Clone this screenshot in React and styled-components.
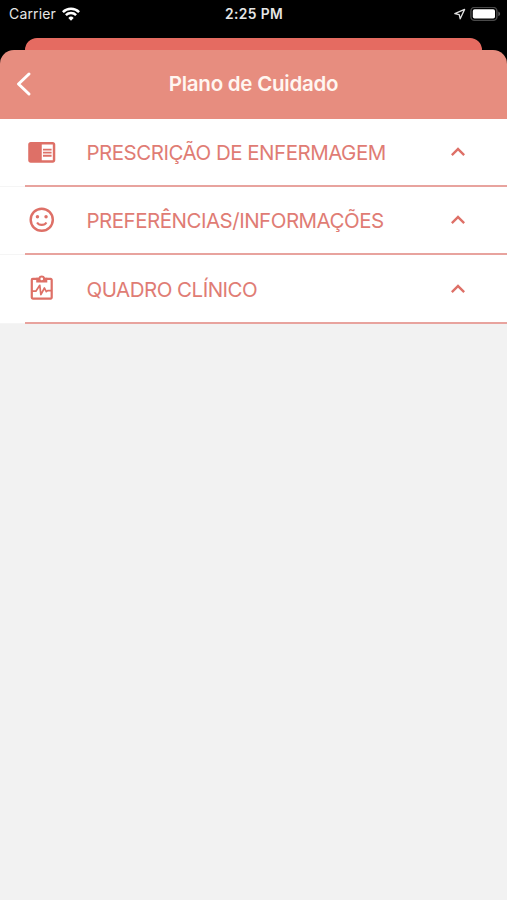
import styled, { createGlobalStyle } from 'styled-components';

const GlobalStyle = createGlobalStyle`
  * {
    box-sizing: border-box;
  }

  body {
    margin: 0;
    background: #f2f2f2;
    font-family: Inter, 'Liberation Sans', sans-serif;
  }
`;

const Screen = styled.div`
  display: flex;
  flex-direction: column;
  height: 900px;
  background: #f2f2f2;
  overflow: hidden;
`;

const Backdrop = styled.div`
  background: #000;
`;

const StatusBar = styled.div`
  display: grid;
  grid-template-columns: 1fr auto 1fr;
  align-items: center;
  height: 38px;
  padding: 0 6px 10px 9px;
  color: #e6e6e6;
  font-size: 14px;
  line-height: 18px;
`;

const Carrier = styled.div`
  display: flex;
  align-items: center;
  gap: 6px;
  letter-spacing: 0.15px;
`;

const Time = styled.div`
  padding-right: 2px;
  font-size: 13.8px;
  font-weight: 600;
  letter-spacing: 0.4px;
`;

const StatusIcons = styled.div`
  display: flex;
  align-items: center;
  justify-content: flex-end;
  gap: 4px;
`;

const PreviousCard = styled.div`
  height: 12px;
  margin: 0 25px;
  border-radius: 12px 12px 0 0;
  background: #e56b61;
`;

const Header = styled.header`
  display: grid;
  grid-template-columns: 60px 1fr 60px;
  align-items: center;
  height: 68.6px;
  border-radius: 14px 14px 0 0;
  background: #e78d7f;
`;

const BackButton = styled.button`
  display: flex;
  height: 26px;
  padding: 0 0 0 15px;
  border: none;
  background: transparent;
`;

const Title = styled.h1`
  margin: 0;
  color: #fff6f1;
  font-size: 20.5px;
  font-weight: 600;
  line-height: 26px;
  letter-spacing: -0.25px;
  text-align: center;
`;

const List = styled.ul`
  margin: 0;
  padding: 0;
  list-style: none;
`;

const Row = styled.li`
  display: flex;
  height: 68.4px;
  padding-left: 25px;
  background: #fff;
  box-shadow: inset 0 -1px 0 #f5f5f5;
`;

const RowContent = styled.div`
  display: flex;
  flex: 1;
  align-items: center;
  padding-right: 35px;
  border-bottom: 2px solid #e8a39e;
  color: #de7067;
`;

const IconSlot = styled.span`
  display: flex;
  width: 61.5px;
  padding-left: 2px;
`;

const Label = styled.span`
  flex: 1;
  padding-top: 2px;
  color: #e07c74;
  font-size: 20.5px;
  font-weight: 400;
  line-height: 26px;
  letter-spacing: -0.5px;
  white-space: nowrap;
`;

const WifiIcon = () => (
  <svg width="18" height="14" viewBox="0 0 18 14" fill="none" stroke="#fff" strokeWidth="2.5">
    <path d="M0.9 5.1a11.4 11.4 0 0 1 16.2 0" />
    <path d="M3.9 8.1a7.2 7.2 0 0 1 10.2 0" />
    <path d="M9 13.7l-2.7-2.8a3.9 3.9 0 0 1 5.4 0z" fill="#fff" stroke="none" />
  </svg>
);

const LocationIcon = () => (
  <svg width="13" height="13" viewBox="0 0 13 13" fill="none" stroke="#e0e0e0" strokeWidth="1.3">
    <path d="M1.8 5.6L11.6 1.4 7.2 10.8 6.2 6.6z" strokeLinejoin="round" />
  </svg>
);

const BatteryIcon = () => (
  <svg width="31" height="15" viewBox="0 0 31 15">
    <rect x="0.9" y="0.4" width="26" height="13" rx="3.6" fill="none" stroke="#4a4a4a" strokeWidth="1.4" />
    <rect x="2.8" y="2.3" width="22.2" height="9.2" rx="1.8" fill="#fff" />
    <path d="M28.3 4.5v4.8c2.4-1 2.4-3.8 0-4.8z" fill="#5a5a5a" />
  </svg>
);

const BackIcon = () => (
  <svg width="18" height="26" viewBox="0 0 18 26" fill="none" stroke="#fff" strokeWidth="3">
    <path d="M14 3L3.5 13 14 23" strokeLinecap="round" strokeLinejoin="round" />
  </svg>
);

const ReaderIcon = () => (
  <svg width="29.5" height="29.5" viewBox="0 0 24 24" fill="currentColor">
    <path d="M13 12h7v1.5h-7zm0-2.5h7V11h-7zm0 5h7V16h-7zM21 4H3c-1.1 0-2 .9-2 2v13c0 1.1.9 2 2 2h18c1.1 0 2-.9 2-2V6c0-1.1-.9-2-2-2zm0 15h-9V6h9v13z" />
  </svg>
);

const FaceIcon = () => (
  <svg width="29.5" height="29.5" viewBox="0 0 24 24" fill="none" stroke="currentColor" strokeWidth="2">
    <circle cx="12" cy="12" r="9" />
    <path d="M8.2 14.2c1.5 2.6 6.1 2.6 7.6 0" strokeWidth="1.7" />
    <circle cx="8.5" cy="9.5" r="1.4" fill="currentColor" stroke="none" />
    <circle cx="15.5" cy="9.5" r="1.4" fill="currentColor" stroke="none" />
  </svg>
);

const ClipboardIcon = () => (
  <svg width="29.5" height="29.5" viewBox="0 0 24 24" fill="none" stroke="currentColor" strokeWidth="1.8">
    <path d="M9 4H4.7a.8.8 0 0 0-.8.8v14.4a.8.8 0 0 0 .8.8h14.6a.8.8 0 0 0 .8-.8V4.8a.8.8 0 0 0-.8-.8H15" />
    <path d="M7.5 3.1h1.7a3 3 0 0 1 5.6 0h1.7v3.8h-9zM12 2.9a1.1 1.1 0 1 0 0 2.2 1.1 1.1 0 0 0 0-2.2z" fill="currentColor" fillRule="evenodd" stroke="none" />
    <path d="M4 14h3.2l3.2-4.8.9 7.6 2.9-5.4 1.5 3 1.1-.9H20" strokeWidth="1.4" strokeLinejoin="round" />
  </svg>
);

const ChevronUp = () => (
  <svg width="28" height="28" viewBox="0 0 24 24" fill="currentColor">
    <path d="M12 8l-6 6 1.41 1.41L12 10.83l4.59 4.58L18 14z" />
  </svg>
);

const sections = [
  { label: 'PRESCRIÇÃO DE ENFERMAGEM', icon: <ReaderIcon /> },
  { label: 'PREFERÊNCIAS/INFORMAÇÕES', icon: <FaceIcon /> },
  { label: 'QUADRO CLÍNICO', icon: <ClipboardIcon /> },
];

function App() {
  return (
    <>
      <GlobalStyle />
      <Screen>
        <Backdrop>
          <StatusBar>
            <Carrier>
              Carrier
              <WifiIcon />
            </Carrier>
            <Time>2:25 PM</Time>
            <StatusIcons>
              <LocationIcon />
              <BatteryIcon />
            </StatusIcons>
          </StatusBar>
          <PreviousCard />
          <Header>
            <BackButton aria-label="Voltar">
              <BackIcon />
            </BackButton>
            <Title>Plano de Cuidado</Title>
          </Header>
        </Backdrop>
        <List>
          {sections.map(({ label, icon }) => (
            <Row key={label}>
              <RowContent>
                <IconSlot>{icon}</IconSlot>
                <Label>{label}</Label>
                <ChevronUp />
              </RowContent>
            </Row>
          ))}
        </List>
      </Screen>
    </>
  );
}

export default App;
